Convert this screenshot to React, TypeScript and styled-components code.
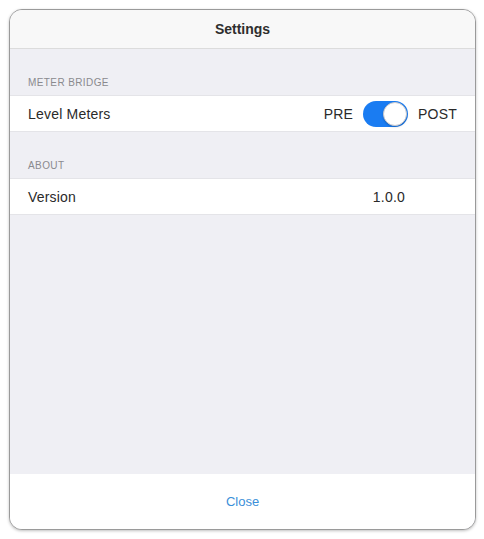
import React from "react";
import styled, { createGlobalStyle } from "styled-components";

const Global = createGlobalStyle`
  html, body { margin: 0; padding: 0; background: #ffffff; }
  body { font-family: "Liberation Sans", Arial, sans-serif; }
`;

const Page = styled.div`
  padding: 9px 8px 9px 9px;
  box-sizing: border-box;
  width: 484px;
  height: 539px;
`;

const Panel = styled.div`
  box-sizing: border-box;
  width: 467px;
  height: 521px;
  border: 1.5px solid #9a9a9a;
  border-radius: 13px;
  box-shadow: 0 1px 3px rgba(0, 0, 0, 0.25);
  overflow: hidden;
  display: flex;
  flex-direction: column;
  background: #efeff4;
`;

const Header = styled.div`
  height: 38px;
  flex: none;
  background: #f8f8f8;
  border-bottom: 1px solid #dcdcdc;
  display: flex;
  align-items: center;
  justify-content: center;
  font-weight: 700;
  font-size: 14px;
  color: #2e2e2e;
`;

const Body = styled.div`
  flex: 1;
  display: flex;
  flex-direction: column;
`;

const SectionTitle = styled.div`
  height: 46px;
  box-sizing: border-box;
  padding: 0 18px 7px;
  display: flex;
  align-items: flex-end;
  font-size: 10px;
  letter-spacing: 0.4px;
  color: #8a8a8e;
  text-transform: uppercase;
`;

const Row = styled.div`
  height: 37px;
  box-sizing: border-box;
  background: #ffffff;
  border-top: 1px solid #e4e4e8;
  border-bottom: 1px solid #e4e4e8;
  display: flex;
  align-items: center;
  padding: 0 18px;
  font-size: 14px;
  letter-spacing: 0.2px;
  color: #2a2a2a;
`;

const Label = styled.span`
  flex: 1;
`;

const Value = styled.span<{ $offset?: number }>`
  margin-right: ${(p) => p.$offset ?? 0}px;
`;

const ToggleGroup = styled.div`
  display: flex;
  align-items: center;
  gap: 10px;
`;

const Track = styled.div`
  width: 45px;
  height: 26px;
  border-radius: 13px;
  background: #1a7cf2;
  position: relative;
  box-sizing: border-box;
`;

const Thumb = styled.div`
  position: absolute;
  right: 1px;
  top: 1px;
  width: 24px;
  height: 24px;
  border-radius: 50%;
  background: #ffffff;
  box-sizing: border-box;
  border: 1px solid #c8c8cc;
  box-shadow: 0 1px 2px rgba(0, 0, 0, 0.2);
`;

const Footer = styled.div`
  height: 55px;
  flex: none;
  background: #ffffff;
  display: flex;
  align-items: center;
  justify-content: center;
  font-size: 13px;
  color: #3b8fd9;
`;

export default function App() {
  return (
    <Page>
      <Global />
      <Panel>
        <Header>Settings</Header>
        <Body>
          <SectionTitle>Meter Bridge</SectionTitle>
          <Row>
            <Label>Level Meters</Label>
            <ToggleGroup>
              <span>PRE</span>
              <Track>
                <Thumb />
              </Track>
              <span>POST</span>
            </ToggleGroup>
          </Row>
          <SectionTitle>About</SectionTitle>
          <Row>
            <Label>Version</Label>
            <Value $offset={52}>1.0.0</Value>
          </Row>
        </Body>
        <Footer>Close</Footer>
      </Panel>
    </Page>
  );
}
